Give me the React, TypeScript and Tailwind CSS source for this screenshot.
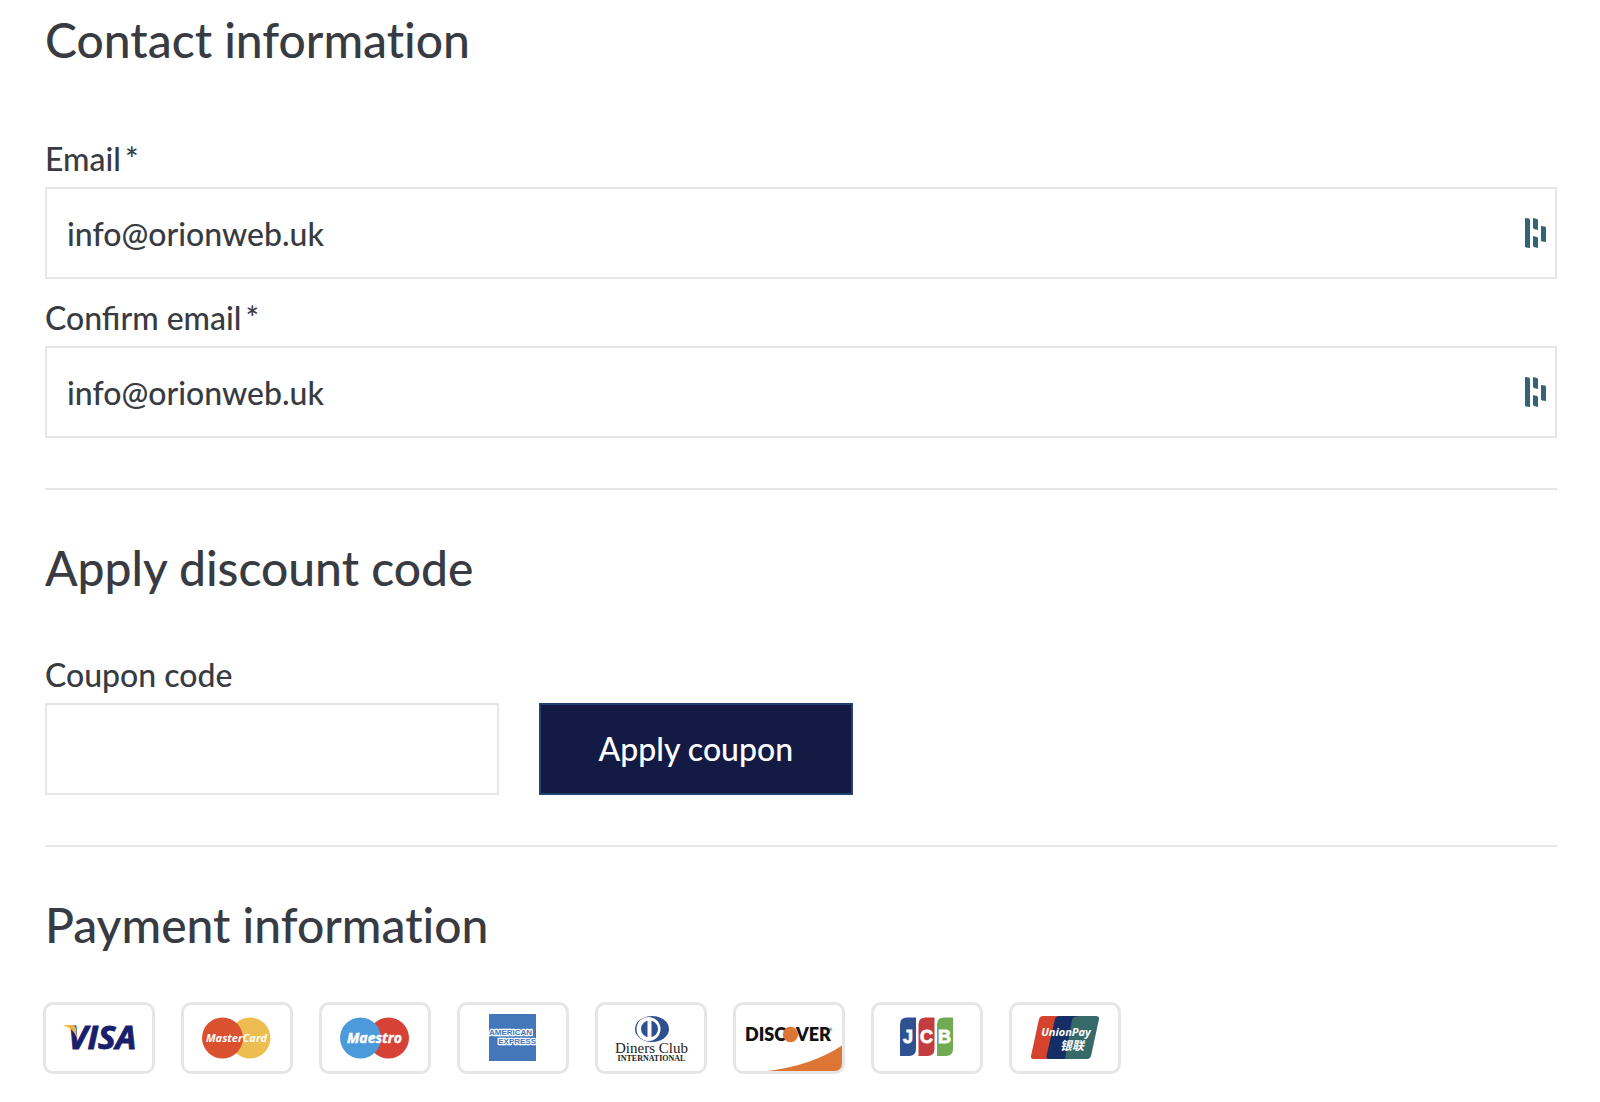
import React, { useState } from "react";

interface EmailFieldProps {
  id: string;
  label: string;
  value: string;
  onChange: (value: string) => void;
}

interface PaymentMethod {
  name: string;
  logo: React.ReactNode;
}

const paymentMethods: PaymentMethod[] = [
  {
    name: "Visa",
    logo: (
      <>
        <text
          x="25"
          y="47"
          fontSize="33"
          fontWeight="700"
          fontStyle="italic"
          fontFamily="'Open Sans', sans-serif"
          fill="#1a1f6c"
          stroke="#1a1f6c"
          strokeWidth="1"
        >
          VISA
        </text>
        <path d="M20 23H30Q33 24 33 27L34 36Q30 26 20 23Z" fill="#ebb344" />
      </>
    ),
  },
  {
    name: "MasterCard",
    logo: (
      <>
        <circle cx="69" cy="36" r="20.5" fill="#eebd51" />
        <circle cx="41.5" cy="36" r="20.5" fill="#d9512f" />
        <text
          x="55.5"
          y="39.5"
          textAnchor="middle"
          fontSize="11"
          fontWeight="700"
          fontStyle="italic"
          fontFamily="'Open Sans', sans-serif"
          fill="#fff"
        >
          MasterCard
        </text>
      </>
    ),
  },
  {
    name: "Maestro",
    logo: (
      <>
        <circle cx="69.5" cy="36" r="20.5" fill="#d64336" />
        <circle cx="41.5" cy="36" r="20.5" fill="#4c9ad9" />
        <text
          x="55.5"
          y="41"
          textAnchor="middle"
          fontSize="14"
          fontWeight="700"
          fontStyle="italic"
          fontFamily="'Open Sans', sans-serif"
          fill="#fff"
          stroke="#fff"
          strokeWidth="0.4"
        >
          Maestro
        </text>
      </>
    ),
  },
  {
    name: "American Express",
    logo: (
      <>
        <rect x="32" y="12" width="47" height="47" fill="#4477b9" />
        <g
          fontSize="8"
          fontWeight="700"
          fontFamily="'Liberation Sans', Arial, sans-serif"
          fill="#4477b9"
          stroke="#fff"
          strokeWidth="2.4"
          strokeLinejoin="round"
          paintOrder="stroke"
        >
          <text x="32" y="33">
            AMERICAN
          </text>
          <text x="79" y="42" textAnchor="end">
            EXPRESS
          </text>
        </g>
      </>
    ),
  },
  {
    name: "Diners Club International",
    logo: (
      <>
        <ellipse cx="57" cy="27" rx="17" ry="13" fill="#2c5090" />
        <circle cx="53.5" cy="27" r="12" fill="#fff" />
        <circle cx="54.5" cy="27" r="8.5" fill="#2c5090" />
        <rect x="52.5" y="17" width="4" height="20" fill="#fff" />
        <text
          x="56.5"
          y="51"
          textAnchor="middle"
          fontSize="15"
          fontFamily="'Liberation Serif', serif"
          fill="#222"
        >
          Diners Club
        </text>
        <text
          x="56.5"
          y="58.5"
          textAnchor="middle"
          fontSize="8"
          fontWeight="700"
          fontFamily="'Liberation Serif', serif"
          fill="#222"
        >
          INTERNATIONAL
        </text>
      </>
    ),
  },
  {
    name: "Discover",
    logo: (
      <>
        <path d="M35 69Q80 63 109 43.5V69Z" fill="#dd7634" />
        <g fontSize="18" fontWeight="800" fontFamily="Lato, sans-serif" fill="#111">
          <text x="12" y="39">
            DISC
          </text>
          <text x="63" y="39">
            VER
          </text>
        </g>
        <circle cx="57.5" cy="32.5" r="7.7" fill="#dd7634" />
        <text x="96" y="29" fontSize="4" fontFamily="Lato, sans-serif" fill="#111">
          ®
        </text>
      </>
    ),
  },
  {
    name: "JCB",
    logo: (
      <>
        <path d="M36 15.5H45V47Q45 54 38 54H29V22.5Q29 15.5 36 15.5Z" fill="#2f5190" />
        <path d="M54.5 15.5H63.5V47Q63.5 54 56.5 54H47.5V22.5Q47.5 15.5 54.5 15.5Z" fill="#c23c40" />
        <path d="M73 15.5H82V47Q82 54 75 54H66V22.5Q66 15.5 73 15.5Z" fill="#70ab54" />
        <g
          textAnchor="middle"
          fontSize="18"
          fontWeight="700"
          fontFamily="'Liberation Sans', Arial, sans-serif"
          fill="#fff"
          stroke="#fff"
          strokeWidth="0.8"
        >
          <text x="37" y="41">
            J
          </text>
          <text x="55.5" y="41">
            C
          </text>
          <text x="73.5" y="41">
            B
          </text>
        </g>
      </>
    ),
  },
  {
    name: "UnionPay",
    logo: (
      <>
        <path d="M34 14H52L42 57H24Q21.500 57 22 54L30 17Q31 14 34 14Z" fill="#d5432d" />
        <path d="M51 14H70L60 57H40Q37 57 37.500 54L46 17Q47 14 51 14Z" fill="#152e66" />
        <path d="M70 14H87Q90.500 14 90 17L82 54Q81 57 78 57H56L63 18Q64 14 70 14Z" fill="#366a69" />
        <text
          x="57"
          y="34"
          textAnchor="middle"
          fontSize="11"
          fontWeight="700"
          fontStyle="italic"
          fontFamily="'Open Sans', sans-serif"
          fill="#fff"
        >
          UnionPay
        </text>
        <text
          x="63"
          y="48"
          textAnchor="middle"
          fontSize="12"
          fontWeight="700"
          fontStyle="italic"
          fontFamily="'Noto Sans CJK SC', sans-serif"
          fill="#fff"
        >
          银联
        </text>
      </>
    ),
  },
];

const PasswordManagerIcon = () => (
  <svg
    viewBox="0 0 21 30"
    className="absolute right-[11px] top-[31px] w-[21px] h-[30px] pointer-events-none"
    fill="#326473"
    aria-hidden="true"
  >
    <path d="M0 0L4 0.500L5 1.500V30L1 29.500L0 28.500Z" />
    <path d="M8 0L12 1L13 2V12L9 11L8 10Z" />
    <path d="M8 18L12 19L13 20V30L9 29L8 28Z" />
    <path d="M16 8L20 8.500L21 9.500V24L17 23.500L16 22.500Z" />
  </svg>
);

const EmailField: React.FC<EmailFieldProps> = ({ id, label, value, onChange }) => {
  return (
    <div>
      <label htmlFor={id} className="block mb-2 text-[32px] leading-10">
        {label}
        <span className="ml-1">*</span>
      </label>
      <div className="relative">
        <input
          id={id}
          type="email"
          required
          value={value}
          onChange={(e) => onChange(e.target.value)}
          className="block w-full h-[92px] pl-5 pr-12 border-2 border-[#e6e6e6] bg-white text-[32px] outline-none"
        />
        <PasswordManagerIcon />
      </div>
    </div>
  );
};

const SectionTitle: React.FC<{ children: React.ReactNode }> = ({ children }) => (
  <h2 className="text-5xl leading-14 [font-variant-ligatures:no-common-ligatures]">{children}</h2>
);

const App = () => {
  const [email, setEmail] = useState("info@orionweb.uk");
  const [confirmEmail, setConfirmEmail] = useState("info@orionweb.uk");
  const [coupon, setCoupon] = useState("");

  return (
    <main className="pt-3 pb-7 pl-[45px] pr-[43px] bg-white text-[#383b42] font-medium font-[Lato,sans-serif]">
      <section className="pb-[50px] border-b-2 border-[#e6e6e6]">
        <SectionTitle>Contact information</SectionTitle>
        <div className="mt-[71px] flex flex-col gap-[19px]">
          <EmailField id="email" label="Email" value={email} onChange={setEmail} />
          <EmailField
            id="confirm-email"
            label="Confirm email"
            value={confirmEmail}
            onChange={setConfirmEmail}
          />
        </div>
      </section>

      <section className="py-[50px] border-b-2 border-[#e6e6e6]">
        <SectionTitle>Apply discount code</SectionTitle>
        <form className="mt-[59px] flex items-end gap-10" onSubmit={(e) => e.preventDefault()}>
          <div className="w-[30%]">
            <label htmlFor="coupon" className="block mb-2 text-[32px] leading-10">
              Coupon code
            </label>
            <input
              id="coupon"
              type="text"
              value={coupon}
              onChange={(e) => setCoupon(e.target.value)}
              className="block w-full h-[92px] px-5 border-2 border-[#e6e6e6] bg-white text-[32px] outline-none"
            />
          </div>
          <button
            type="submit"
            className="h-[92px] px-[58px] border-2 border-[#20436e] bg-[#131b45] text-white text-[32px] whitespace-nowrap cursor-pointer"
          >
            Apply coupon
          </button>
        </form>
      </section>

      <section className="pt-[50px]">
        <SectionTitle>Payment information</SectionTitle>
        <ul className="mt-[49px] -ml-0.5 flex flex-wrap gap-[26px]">
          {paymentMethods.map(({ name, logo }) => (
            <li
              key={name}
              className="w-28 h-[72px] border-3 border-[#e6e6e6] rounded-[10px] overflow-hidden"
            >
              <svg viewBox="3 3 106 66" className="block w-full h-full" role="img" aria-label={name}>
                {logo}
              </svg>
            </li>
          ))}
        </ul>
      </section>
    </main>
  );
};

export default App;
